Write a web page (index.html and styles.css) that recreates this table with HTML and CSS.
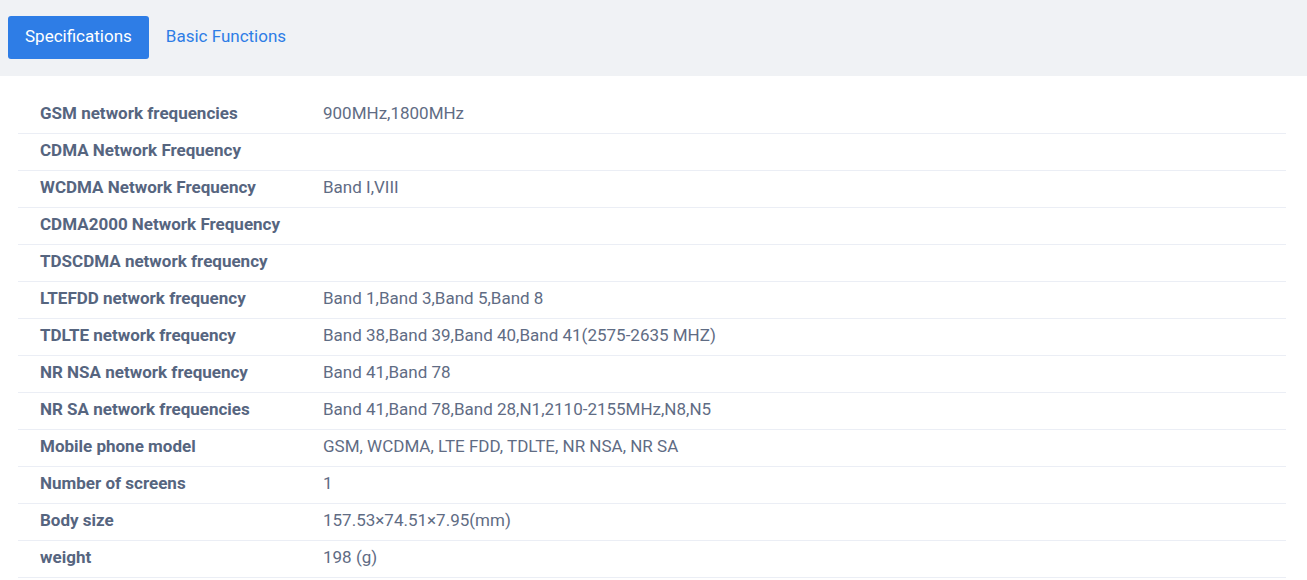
FILE: index.html
```html
<!DOCTYPE html>
<html>
<head>
<meta charset="utf-8">
<link rel="stylesheet" href="styles.css">
</head>
<body>
<div class="tabs">
  <button class="tab active">Specifications</button>
  <button class="tab">Basic Functions</button>
</div>
<div class="content">
  <div class="table">
    <div class="row"><div class="label">GSM network frequencies</div><div class="value">900MHz,1800MHz</div></div>
    <div class="row"><div class="label">CDMA Network Frequency</div><div class="value"></div></div>
    <div class="row"><div class="label">WCDMA Network Frequency</div><div class="value">Band I,VIII</div></div>
    <div class="row"><div class="label">CDMA2000 Network Frequency</div><div class="value"></div></div>
    <div class="row"><div class="label">TDSCDMA network frequency</div><div class="value"></div></div>
    <div class="row"><div class="label">LTEFDD network frequency</div><div class="value">Band 1,Band 3,Band 5,Band 8</div></div>
    <div class="row"><div class="label">TDLTE network frequency</div><div class="value">Band 38,Band 39,Band 40,Band 41(2575-2635 MHZ)</div></div>
    <div class="row"><div class="label">NR NSA network frequency</div><div class="value">Band 41,Band 78</div></div>
    <div class="row"><div class="label">NR SA network frequencies</div><div class="value">Band 41,Band 78,Band 28,N1,2110-2155MHz,N8,N5</div></div>
    <div class="row"><div class="label">Mobile phone model</div><div class="value">GSM, WCDMA, LTE FDD, TDLTE, NR NSA, NR SA</div></div>
    <div class="row"><div class="label">Number of screens</div><div class="value">1</div></div>
    <div class="row"><div class="label">Body size</div><div class="value">157.53×74.51×7.95(mm)</div></div>
    <div class="row"><div class="label">weight</div><div class="value">198 (g)</div></div>
  </div>
</div>
</body>
</html>
```
FILE: styles.css
```css
* { box-sizing: border-box; }
html, body { margin: 0; padding: 0; background: #fff; }
body { font-family: Roboto, "Liberation Sans", sans-serif; }
.tabs {
  background: #f0f2f5;
  height: 76px;
  padding: 16px 8px 0 8px;
  display: flex;
  align-items: flex-start;
}
.tab {
  font-family: Roboto, "Liberation Sans", sans-serif;
  font-size: 17px;
  height: 43px;
  padding: 0 17px 2px 17px;
  border: none;
  background: transparent;
  color: #2e7de6;
  border-radius: 3px;
  cursor: pointer;
  line-height: 41px;
}
.tab.active {
  background: #2e7de6;
  color: #fff;
}
.content {
  padding: 21px 21px 0 18px;
}
.row {
  display: grid;
  grid-template-columns: 283px 1fr;
  padding-left: 22px;
  padding-bottom: 4px;
  height: 37px;
  align-items: center;
  border-bottom: 1px solid #ebeef5;
  font-size: 17px;
}
.label {
  font-weight: bold;
  color: #56657f;
}
.value {
  color: #5f6c84;
}
```
